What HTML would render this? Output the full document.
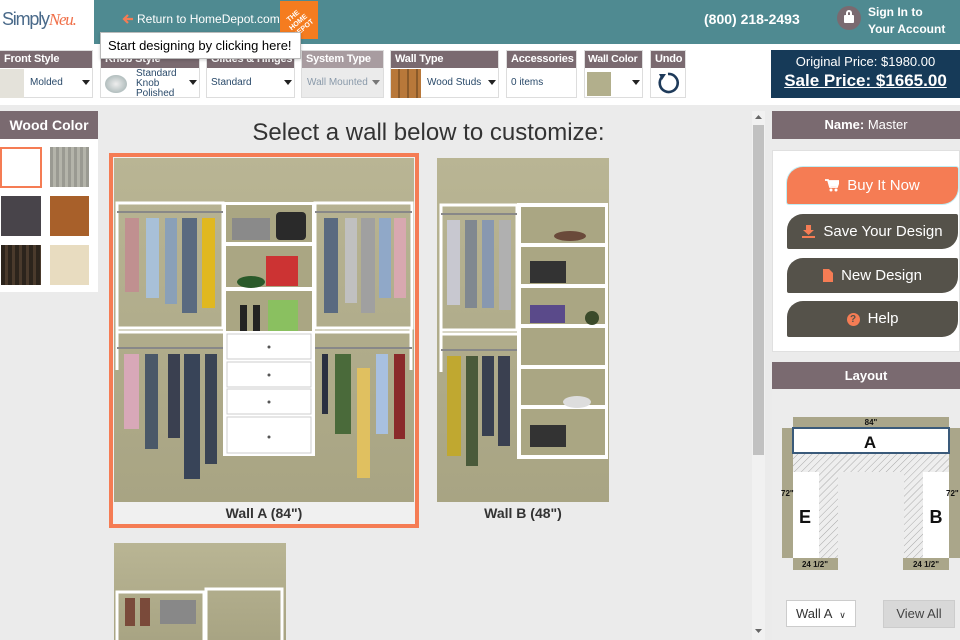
<!DOCTYPE html>
<html><head><meta charset="utf-8"><style>
*{margin:0;padding:0;box-sizing:border-box}
body{width:960px;height:640px;overflow:hidden;background:#ebebeb;font-family:"Liberation Sans",Arial,sans-serif;position:relative}
.a{position:absolute}
.hd{background:#7a6a70;color:#fff;font-weight:bold}
.tb{position:absolute;top:50px;height:48px;background:#fff;border:1px solid #ddd}
.tb .h{height:17px;background:#7a6a70;color:#fff;font-weight:bold;font-size:11px;padding:2px 4px;white-space:nowrap;overflow:hidden;letter-spacing:-0.2px}
.tb .b{font-size:10px;color:#2a4a6a;position:absolute;top:26px}
.car{position:absolute;top:29px;width:0;height:0;border-left:4px solid transparent;border-right:4px solid transparent;border-top:5px solid #222}
.btn{position:absolute;left:787px;width:171px;color:#fff;font-size:15px;text-align:center;border-radius:16px 2px 16px 2px}
.btn svg{vertical-align:-2px;margin-right:8px}
</style></head><body>
<!-- header -->
<div class="a" style="left:0;top:0;width:960px;height:44px;background:#4f8a91"></div>
<div class="a" style="left:0;top:0;width:94px;height:44px;background:#fff"></div>
<div class="a" style="left:2px;top:9px;font-size:18px;color:#4a6a8a;letter-spacing:-1.2px">Simply<span style="color:#f0704a;font-style:italic;font-family:'Liberation Serif',serif;font-size:17px">Neu.</span></div>
<svg class="a" style="left:122px;top:13px" width="12" height="12" viewBox="0 0 12 12"><path d="M11 6H3M6 2L2 6l4 4" fill="none" stroke="#f57c54" stroke-width="2.2"/></svg>
<div class="a" style="left:137px;top:12px;font-size:12px;color:#fff">Return to HomeDepot.com</div>
<div class="a" style="left:280px;top:1px;width:38px;height:38px;background:#f57c1f;color:#fff;font-size:7px;font-weight:bold;text-align:center;line-height:8px;padding-top:8px;overflow:hidden"><div style="transform:rotate(-40deg);margin-top:2px">THE<br>HOME<br>DEPOT</div></div>
<div class="a" style="left:704px;top:11px;font-size:14px;color:#fff;font-weight:bold">(800) 218-2493</div>
<div class="a" style="left:837px;top:6px;width:24px;height:24px;border-radius:50%;background:#7a6a70"></div>
<div class="a" style="left:844px;top:15px;width:10px;height:8px;background:#fff;border-radius:1px"></div>
<div class="a" style="left:846px;top:10px;width:6px;height:7px;border:2px solid #fff;border-bottom:none;border-radius:3px 3px 0 0"></div>
<div class="a" style="left:868px;top:4px;font-size:12px;color:#fff;font-weight:bold;line-height:17px">Sign In to<br>Your Account</div>
<!-- toolbar -->
<div class="a" style="left:0;top:44px;width:960px;height:61px;background:#fff"></div>
<div class="tb" style="left:-1px;width:94px"><div class="h">Front Style</div><div class="a" style="left:0;top:18px;width:24px;height:29px;background:#e4e2da"></div><div class="b" style="left:30px">Molded</div><div class="car" style="left:82px"></div></div>
<div class="tb" style="left:100px;width:100px"><div class="h">Knob Style</div><div class="a" style="left:4px;top:24px;width:22px;height:18px;border-radius:50%;background:radial-gradient(#eee,#9aa)"></div><div class="b" style="left:35px;top:18px;line-height:10px">Standard<br>Knob<br>Polished</div><div class="car" style="left:88px"></div></div>
<div class="tb" style="left:206px;width:89px"><div class="h">Glides &amp; Hinges</div><div class="b" style="left:4px">Standard</div><div class="car" style="left:77px"></div></div>
<div class="tb" style="left:301px;width:83px;background:#ebebeb"><div class="h" style="background:#a89ca0">System Type</div><div class="b" style="left:5px;color:#8a9aaa">Wall Mounted</div><div class="car" style="left:70px;border-top-color:#777"></div></div>
<div class="tb" style="left:390px;width:109px"><div class="h">Wall Type</div><div class="a" style="left:0;top:18px;width:30px;height:29px;background:repeating-linear-gradient(90deg,#b8783a 0 7px,#8a5a2a 7px 9px)"></div><div class="b" style="left:36px">Wood Studs</div><div class="car" style="left:97px"></div></div>
<div class="tb" style="left:506px;width:71px"><div class="h">Accessories</div><div class="b" style="left:4px">0 items</div></div>
<div class="tb" style="left:584px;width:59px"><div class="h" style="padding-left:3px;font-size:10.5px">Wall Color</div><div class="a" style="left:2px;top:21px;width:24px;height:24px;background:#b2af8c"></div><div class="car" style="left:47px"></div></div>
<div class="tb" style="left:650px;width:36px"><div class="h">Undo</div><svg class="a" style="left:5px;top:20px" width="24" height="24" viewBox="0 0 24 24"><path d="M6 6 A9 9 0 1 0 12 3" fill="none" stroke="#1e3a5a" stroke-width="2.6"/><path d="M3 3 L10 3 L6 9Z" fill="#1e3a5a"/></svg></div>
<div class="a" style="left:771px;top:50px;width:189px;height:48px;background:#163a58;color:#fff;text-align:center"><div style="font-size:13px;margin-top:4px">Original Price: $1980.00</div><div style="font-size:17px;font-weight:bold;text-decoration:underline;margin-top:2px">Sale Price: $1665.00</div></div>
<!-- tooltip -->
<div class="a" style="left:100px;top:32px;width:201px;height:27px;background:#fff;border:1px solid #bbb;font-size:13px;padding:5px 7px;box-shadow:0 1px 3px rgba(0,0,0,.2)">Start designing by clicking here!</div>
<!-- left panel -->
<div class="a" style="left:0;top:111px;width:98px;height:181px;background:#fff"></div>
<div class="a hd" style="left:0;top:111px;width:98px;height:28px;font-size:14px;text-align:center;line-height:28px">Wood Color</div>
<div class="a" style="left:0;top:147px;width:42px;height:41px;background:#fff;border:2px solid #f57c54"></div>
<div class="a" style="left:50px;top:147px;width:39px;height:40px;background:repeating-linear-gradient(90deg,#9a9a92 0 3px,#b4b4aa 3px 6px)"></div>
<div class="a" style="left:1px;top:196px;width:40px;height:40px;background:#48444a"></div>
<div class="a" style="left:50px;top:196px;width:39px;height:40px;background:#a8602a"></div>
<div class="a" style="left:1px;top:245px;width:40px;height:40px;background:repeating-linear-gradient(90deg,#2c241c 0 4px,#4a3a2c 4px 7px)"></div>
<div class="a" style="left:50px;top:245px;width:39px;height:40px;background:#e8dcc0"></div>
<!-- center -->
<div class="a" style="left:105px;top:111px;width:647px;height:529px;background:#ebebeb"></div>
<div class="a" style="left:105px;top:119px;width:647px;text-align:center;font-size:24px;color:#333">Select a wall below to customize:</div>
<div class="a" style="left:109px;top:153px;width:310px;height:375px;border:4px solid #f57c54;background:#f0f0f0"></div>
<div class="a" style="left:113px;top:505px;width:302px;text-align:center;font-size:14px;font-weight:bold;color:#333">Wall A (84")</div>
<div class="a" style="left:437px;top:505px;width:172px;text-align:center;font-size:14px;font-weight:bold;color:#333">Wall B (48")</div>
<svg class="a" style="left:0;top:0" width="960" height="640">
<defs><linearGradient id="w" x1="0" y1="0" x2="0" y2="1"><stop offset="0" stop-color="#b9b594"/><stop offset="1" stop-color="#a8a483"/></linearGradient></defs>
<rect x="114" y="158" width="300" height="344" fill="url(#w)"/>
<g fill="none" stroke="#fff" stroke-width="3">
<rect x="117" y="203" width="106" height="125"/><rect x="315" y="203" width="97" height="125"/>
<line x1="117" y1="332" x2="223" y2="332"/><line x1="315" y1="332" x2="412" y2="332"/>
<line x1="117" y1="328" x2="117" y2="370"/><line x1="411" y1="328" x2="411" y2="370"/>
</g>
<rect x="223" y="202" width="92" height="254" fill="#fff"/>
<rect x="226" y="205" width="86" height="37" fill="#aaa683"/><rect x="226" y="246" width="86" height="41" fill="#aaa683"/><rect x="226" y="291" width="86" height="40" fill="#aaa683"/>
<g fill="#fff" stroke="#ccc"><rect x="227" y="334" width="84" height="25"/><rect x="227" y="362" width="84" height="25"/><rect x="227" y="389" width="84" height="25"/><rect x="227" y="417" width="84" height="36"/></g>
<g fill="#555"><circle cx="269" cy="347" r="1.5"/><circle cx="269" cy="375" r="1.5"/><circle cx="269" cy="402" r="1.5"/><circle cx="269" cy="437" r="1.5"/></g>
<rect x="232" y="218" width="38" height="22" fill="#8a8a8a"/><rect x="276" y="212" width="30" height="28" rx="4" fill="#2a2a2a"/>
<rect x="266" y="256" width="32" height="30" fill="#cc3333"/><ellipse cx="251" cy="282" rx="14" ry="6" fill="#2a5a2a"/>
<rect x="240" y="305" width="7" height="26" fill="#222"/><rect x="253" y="305" width="7" height="26" fill="#222"/><rect x="268" y="300" width="30" height="31" fill="#8ac060"/>
<line x1="117" y1="212" x2="223" y2="212" stroke="#888" stroke-width="2"/><line x1="315" y1="212" x2="412" y2="212" stroke="#888" stroke-width="2"/>
<line x1="117" y1="348" x2="223" y2="348" stroke="#888" stroke-width="2"/><line x1="315" y1="348" x2="412" y2="348" stroke="#888" stroke-width="2"/>
<g><rect x="125" y="218" width="14" height="74" fill="#c09090"/><rect x="146" y="218" width="13" height="80" fill="#a8c0d8"/><rect x="165" y="218" width="12" height="86" fill="#8aa0b8"/><rect x="182" y="218" width="15" height="95" fill="#5a6a80"/><rect x="202" y="218" width="13" height="90" fill="#e0b820"/>
<rect x="324" y="218" width="14" height="95" fill="#5a6a80"/><rect x="345" y="218" width="12" height="85" fill="#c0c0c0"/><rect x="361" y="218" width="14" height="95" fill="#a0a0a0"/><rect x="379" y="218" width="12" height="80" fill="#90a8c8"/><rect x="394" y="218" width="12" height="80" fill="#d8a8b0"/>
<rect x="124" y="354" width="15" height="75" fill="#d8a8b8"/><rect x="145" y="354" width="13" height="95" fill="#4a5868"/><rect x="168" y="354" width="12" height="84" fill="#3a4050"/><rect x="184" y="354" width="16" height="125" fill="#384458"/><rect x="205" y="354" width="12" height="110" fill="#3a4454"/>
<rect x="322" y="354" width="6" height="60" fill="#2a3040"/><rect x="335" y="354" width="16" height="80" fill="#4a6a3a"/><rect x="357" y="368" width="13" height="110" fill="#e0c060"/><rect x="376" y="354" width="12" height="80" fill="#a8c0e0"/><rect x="394" y="354" width="11" height="85" fill="#8a2a2a"/></g>
<rect x="437" y="158" width="172" height="344" fill="url(#w)"/>
<g fill="none" stroke="#fff" stroke-width="3"><rect x="441" y="205" width="76" height="125"/><line x1="441" y1="334" x2="517" y2="334"/><line x1="441" y1="330" x2="441" y2="372"/></g>
<rect x="517" y="203" width="91" height="256" fill="#fff"/>
<g fill="#aaa683"><rect x="521" y="207" width="84" height="36"/><rect x="521" y="247" width="84" height="37"/><rect x="521" y="288" width="84" height="36"/><rect x="521" y="328" width="84" height="37"/><rect x="521" y="369" width="84" height="36"/><rect x="521" y="409" width="84" height="46"/></g>
<rect x="530" y="261" width="36" height="22" fill="#333"/><rect x="530" y="425" width="36" height="22" fill="#333"/><rect x="530" y="305" width="35" height="18" fill="#5a4a8a"/>
<ellipse cx="570" cy="236" rx="16" ry="5" fill="#6a4a3a"/><ellipse cx="577" cy="402" rx="14" ry="6" fill="#ddd"/><circle cx="592" cy="318" r="7" fill="#3a4a2a"/>
<line x1="441" y1="214" x2="517" y2="214" stroke="#888" stroke-width="2"/><line x1="441" y1="350" x2="517" y2="350" stroke="#888" stroke-width="2"/>
<rect x="447" y="220" width="13" height="85" fill="#c8c8d0"/><rect x="465" y="220" width="12" height="88" fill="#808890"/><rect x="482" y="220" width="12" height="88" fill="#8898b0"/><rect x="499" y="220" width="12" height="90" fill="#b0b0b0"/>
<rect x="447" y="356" width="14" height="100" fill="#c0a830"/><rect x="466" y="356" width="12" height="110" fill="#4a5a3a"/><rect x="482" y="356" width="12" height="80" fill="#384050"/><rect x="498" y="356" width="12" height="90" fill="#3a4050"/>
<rect x="114" y="543" width="172" height="97" fill="url(#w)"/>
<g fill="none" stroke="#fff" stroke-width="3"><rect x="117" y="592" width="87" height="60"/><rect x="206" y="589" width="76" height="60"/></g>
<rect x="125" y="598" width="10" height="28" fill="#7a4a3a"/><rect x="140" y="598" width="10" height="28" fill="#7a4a3a"/><rect x="160" y="600" width="36" height="24" fill="#888"/>
<rect x="752" y="111" width="13" height="529" fill="#f1f1f1"/><rect x="753" y="125" width="11" height="330" fill="#c1c1c1"/>
<path d="M755 119 l3.5-4 3.5 4z M755 629 l3.5 4 3.5-4z" fill="#666"/>
</svg>
<!-- right panel -->
<div class="a hd" style="left:772px;top:111px;width:188px;height:28px;font-size:13px;text-align:center;line-height:28px">Name: <span style="font-weight:normal">Master</span></div>
<div class="a" style="left:772px;top:150px;width:188px;height:202px;background:#fff;border:1px solid #e0e0e0"></div>
<div class="btn" style="top:167px;height:37px;line-height:37px;background:#f57c54;box-shadow:0 0 0 1px #bfeef5"><svg width="14" height="13" viewBox="0 0 14 13"><path d="M0 1h3l2 7h7l2-6H4" fill="none" stroke="#fff" stroke-width="1.8"/><rect x="4" y="2" width="9" height="5" fill="#fff"/><circle cx="6" cy="11" r="1.5" fill="#fff"/><circle cx="11" cy="11" r="1.5" fill="#fff"/></svg>Buy It Now</div>
<div class="btn" style="top:214px;height:35px;line-height:35px;background:#55524a"><svg width="13" height="13" viewBox="0 0 13 13"><path d="M4 0h5v5h3L6.5 10 1 5h3z" fill="#f57c54"/><rect x="0" y="11" width="13" height="2" fill="#f57c54"/></svg>Save Your Design</div>
<div class="btn" style="top:258px;height:35px;line-height:35px;background:#55524a"><svg width="10" height="13" viewBox="0 0 10 13"><path d="M0 0h6l4 4v9H0z" fill="#f57c54"/></svg>New Design</div>
<div class="btn" style="top:301px;height:36px;line-height:36px;background:#55524a"><span style="display:inline-block;width:13px;height:13px;border-radius:50%;background:#f57c54;color:#55524a;font-size:10px;line-height:13px;font-weight:bold;margin-right:8px;vertical-align:1px">?</span>Help</div>
<div class="a hd" style="left:772px;top:362px;width:188px;height:27px;font-size:13px;text-align:center;line-height:27px">Layout</div>
<div class="a" style="left:772px;top:389px;width:188px;height:251px;background:#ececec"></div>
<svg class="a" style="left:0;top:0" width="960" height="640">
<defs><pattern id="h" width="5" height="5" patternUnits="userSpaceOnUse" patternTransform="rotate(45)"><rect width="5" height="5" fill="#eee"/><line x1="0" y1="0" x2="0" y2="5" stroke="#aaa" stroke-width="1"/></pattern></defs>
<rect x="793" y="417" width="156" height="11" fill="#aaa68a"/>
<rect x="782" y="428" width="11" height="130" fill="#aaa68a"/><rect x="949" y="428" width="11" height="130" fill="#aaa68a"/>
<rect x="793" y="453" width="156" height="19" fill="url(#h)"/>
<rect x="819" y="472" width="19" height="86" fill="url(#h)"/><rect x="904" y="472" width="19" height="86" fill="url(#h)"/>
<rect x="793" y="472" width="26" height="86" fill="#fff"/><rect x="923" y="472" width="26" height="86" fill="#fff"/>
<rect x="793" y="428" width="156" height="25" fill="#fff" stroke="#3a5a7a" stroke-width="2"/>
<rect x="793" y="558" width="45" height="12" fill="#aaa68a"/><rect x="903" y="558" width="46" height="12" fill="#aaa68a"/>
<g font-family="Liberation Sans,Arial" font-weight="bold" fill="#111">
<text x="870" y="448" font-size="17" text-anchor="middle">A</text>
<text x="805" y="523" font-size="18" text-anchor="middle">E</text>
<text x="936" y="523" font-size="18" text-anchor="middle">B</text>
<text x="871" y="425" font-size="8" text-anchor="middle">84"</text>
<text x="781" y="496" font-size="8">72"</text><text x="946" y="496" font-size="8">72"</text>
<text x="815" y="567" font-size="8" text-anchor="middle">24 1/2"</text><text x="926" y="567" font-size="8" text-anchor="middle">24 1/2"</text>
</g>
</svg>
<div class="a" style="left:786px;top:600px;width:70px;height:27px;background:#fff;border:1px solid #ccc;font-size:13px;line-height:25px;padding-left:9px;color:#333">Wall A <span style="font-size:9px;margin-left:4px">&#8744;</span></div>
<div class="a" style="left:883px;top:600px;width:72px;height:28px;background:#d8d8d8;border:1px solid #ccc;font-size:13px;line-height:26px;text-align:center;color:#444">View All</div>
</body></html>
